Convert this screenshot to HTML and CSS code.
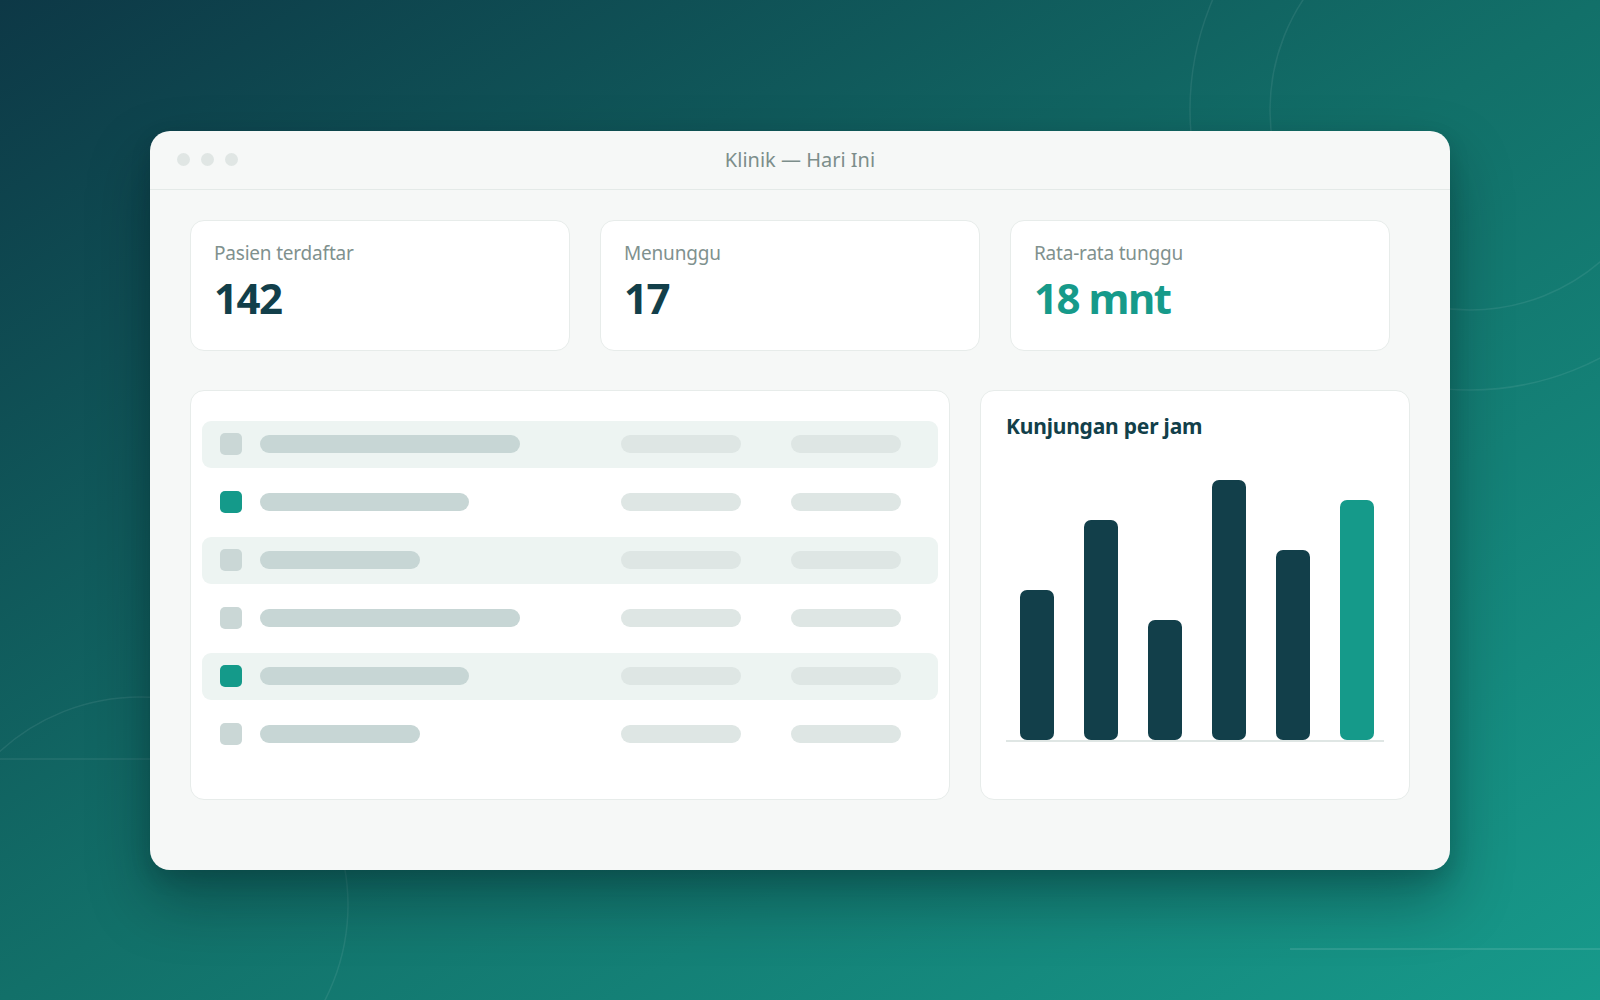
FILE: index.html
```html
<!DOCTYPE html>
<html lang="id">
<head>
    <meta charset="UTF-8">
    <meta name="viewport" content="width=device-width, initial-scale=1.0">
    <title>Klinik — Hari Ini</title>
    <link rel="stylesheet" href="styles.css">
</head>
<body>
    <!-- garis dekorasi latar -->
    <svg class="backdrop" width="1600" height="1000" viewBox="0 0 1600 1000">
        <circle cx="1470" cy="110" r="200" />
        <circle cx="1470" cy="110" r="280" />
        <circle cx="140" cy="905" r="208" />
        <line x1="0" y1="759" x2="600" y2="759" />
        <line x1="1290" y1="949" x2="1600" y2="949" class="bright" />
    </svg>

    <div class="window">
        <div class="titlebar">
            <div class="dots">
                <span></span><span></span><span></span>
            </div>
            <div class="title">Klinik — Hari Ini</div>
            <div></div>
        </div>

        <div class="content">
            <!-- ringkasan -->
            <div class="stats">
                <div class="stat-card">
                    <div class="stat-label">Pasien terdaftar</div>
                    <div class="stat-value">142</div>
                </div>
                <div class="stat-card">
                    <div class="stat-label">Menunggu</div>
                    <div class="stat-value">17</div>
                </div>
                <div class="stat-card">
                    <div class="stat-label">Rata-rata tunggu</div>
                    <div class="stat-value accent">18 mnt</div>
                </div>
            </div>

            <div class="panels">
                <!-- daftar antrean -->
                <div class="panel list-panel">
                    <div class="row shaded">
                        <span class="check"></span>
                        <span class="cell name"><i style="width: 260px"></i></span>
                        <span class="cell col-a"><i></i></span>
                        <span class="cell col-b"><i></i></span>
                    </div>
                    <div class="row">
                        <span class="check on"></span>
                        <span class="cell name"><i style="width: 209px"></i></span>
                        <span class="cell col-a"><i></i></span>
                        <span class="cell col-b"><i></i></span>
                    </div>
                    <div class="row shaded">
                        <span class="check"></span>
                        <span class="cell name"><i style="width: 160px"></i></span>
                        <span class="cell col-a"><i></i></span>
                        <span class="cell col-b"><i></i></span>
                    </div>
                    <div class="row">
                        <span class="check"></span>
                        <span class="cell name"><i style="width: 260px"></i></span>
                        <span class="cell col-a"><i></i></span>
                        <span class="cell col-b"><i></i></span>
                    </div>
                    <div class="row shaded">
                        <span class="check on"></span>
                        <span class="cell name"><i style="width: 209px"></i></span>
                        <span class="cell col-a"><i></i></span>
                        <span class="cell col-b"><i></i></span>
                    </div>
                    <div class="row">
                        <span class="check"></span>
                        <span class="cell name"><i style="width: 160px"></i></span>
                        <span class="cell col-a"><i></i></span>
                        <span class="cell col-b"><i></i></span>
                    </div>
                </div>

                <!-- grafik kunjungan -->
                <div class="panel chart-panel">
                    <h3>Kunjungan per jam</h3>
                    <div class="chart">
                        <div class="bar" style="height: 150px"></div>
                        <div class="bar" style="height: 220px"></div>
                        <div class="bar" style="height: 120px"></div>
                        <div class="bar" style="height: 260px"></div>
                        <div class="bar" style="height: 190px"></div>
                        <div class="bar now" style="height: 240px"></div>
                    </div>
                </div>
            </div>
        </div>
    </div>
</body>
</html>
```

FILE: styles.css
```css
body {
    font-family: "Noto Sans", "Open Sans", sans-serif;
    margin: 0;
    padding: 0;
    height: 100vh;
    overflow: hidden;
    display: flex;
    justify-content: center;
    align-items: center;
    background: linear-gradient(to bottom right, #0d3846, #127069 50%, #179a8b);
}

.backdrop {
    position: absolute;
    left: 0;
    top: 0;
}

.backdrop circle,
.backdrop line {
    fill: none;
    stroke: rgba(255, 255, 255, 0.08);
    stroke-width: 1.5;
}

.backdrop .bright {
    stroke: rgba(255, 255, 255, 0.14);
}

.window {
    position: relative;
    width: 1300px;
    height: 739px;
    background-color: #f6f8f7;
    border-radius: 20px;
    box-shadow: 0 30px 60px rgba(0, 20, 25, 0.35), 0 8px 20px rgba(0, 20, 25, 0.15);
}

.titlebar {
    height: 58px;
    border-bottom: 1px solid #e4eae8;
    display: grid;
    grid-template-columns: 1fr auto 1fr;
    align-items: center;
    padding: 0 27px;
}

.dots {
    display: flex;
    gap: 11px;
}

.dots span {
    width: 13px;
    height: 13px;
    border-radius: 50%;
    background-color: #e0e6e4;
}

.title {
    font-size: 20px;
    color: #7c8e8b;
}

.content {
    padding: 30px 40px;
}

.stats {
    display: grid;
    grid-template-columns: repeat(3, 380px);
    gap: 30px;
}

.stat-card {
    box-sizing: border-box;
    height: 131px;
    background-color: white;
    border: 1px solid #e7ecea;
    border-radius: 14px;
    padding: 20px 23px;
}

.stat-label {
    font-size: 19px;
    line-height: 24px;
    color: #7f918e;
    letter-spacing: -0.2px;
}

.stat-value {
    margin-top: 9px;
    font-size: 42px;
    line-height: 48px;
    font-weight: 700;
    color: #123f4a;
    letter-spacing: -1.5px;
}

.stat-value.accent {
    color: #169a8a;
}

.panels {
    display: grid;
    grid-template-columns: 1fr 430px;
    gap: 30px;
    margin-top: 39px;
}

.panel {
    box-sizing: border-box;
    height: 410px;
    background-color: white;
    border: 1px solid #e7ecea;
    border-radius: 14px;
}

.list-panel {
    padding: 30px 11px 0 11px;
    display: flex;
    flex-direction: column;
    gap: 11px;
}

.row {
    height: 47px;
    display: flex;
    align-items: center;
    padding: 0 37px 0 18px;
    border-radius: 9px;
}

.row.shaded {
    background-color: #edf4f2;
}

.check {
    width: 22px;
    height: 22px;
    border-radius: 5px;
    background-color: #cad7d6;
    flex-shrink: 0;
}

.check.on {
    background-color: #149a8a;
}

.cell {
    display: flex;
}

.cell i {
    display: block;
    height: 18px;
    border-radius: 9px;
    background-color: #dee6e4;
}

.cell.name {
    flex: 1;
    margin-left: 18px;
}

.cell.name i {
    background-color: #c7d6d5;
}

.cell.col-a i {
    width: 120px;
}

.cell.col-b {
    margin-left: 50px;
}

.cell.col-b i {
    width: 110px;
}

.chart-panel {
    padding: 22px 25px 0 25px;
}

.chart-panel h3 {
    margin: 0;
    font-size: 21px;
    line-height: 27px;
    font-weight: 700;
    color: #123f4a;
    letter-spacing: -0.2px;
}

.chart {
    margin-top: 19px;
    height: 281px;
    display: flex;
    justify-content: space-between;
    align-items: flex-end;
    padding: 0 10px 0 14px;
    border-bottom: 2px solid #dfe6e4;
}

.bar {
    width: 34px;
    border-radius: 7px;
    background-color: #123f4a;
}

.bar.now {
    background-color: #159a8a;
}
```
